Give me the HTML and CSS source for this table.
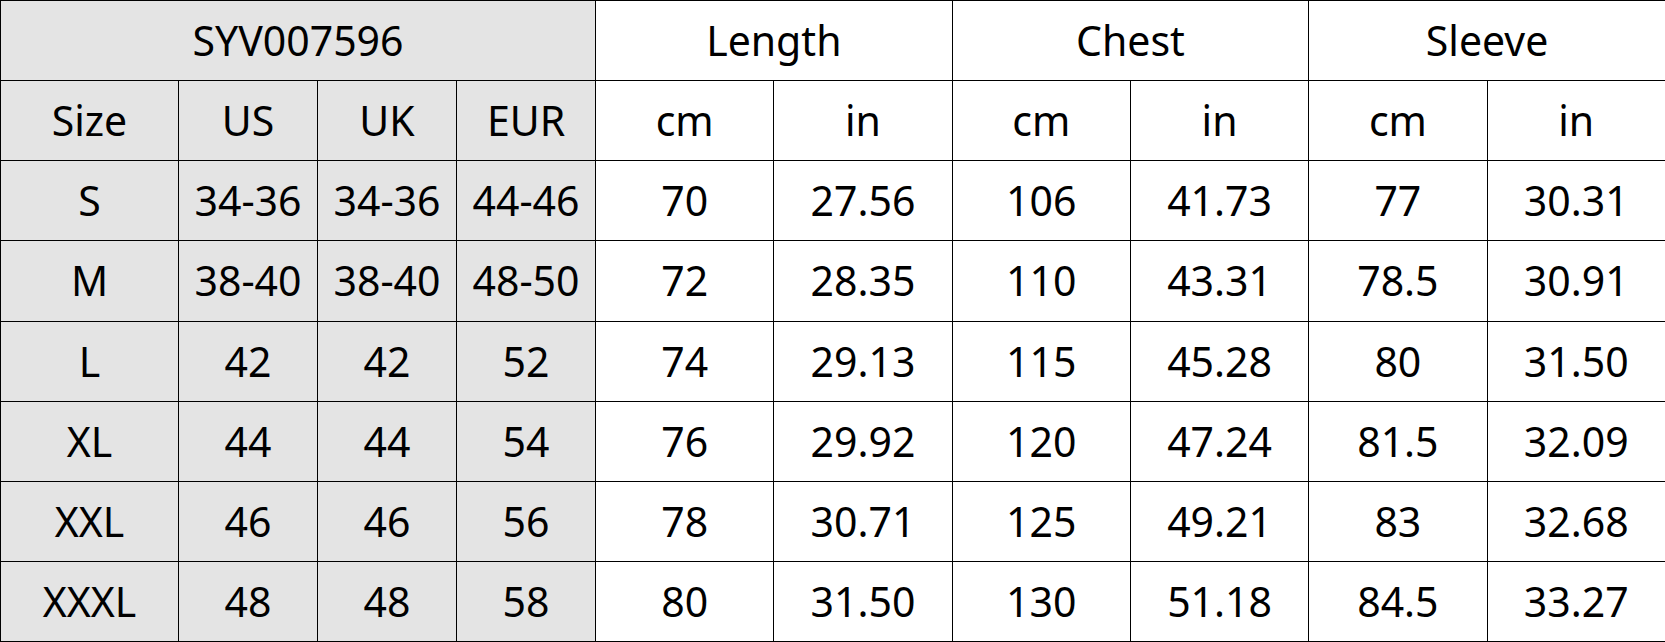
FILE: index.html
```html
<!DOCTYPE html>
<html>
<head>
<meta charset="utf-8">
<link rel="stylesheet" href="styles.css">
</head>
<body>
<table class="chart">
  <colgroup>
    <col class="c-size"><col class="c-reg"><col class="c-reg"><col class="c-reg">
    <col class="c-m"><col class="c-m"><col class="c-m"><col class="c-m"><col class="c-m"><col class="c-m">
  </colgroup>
  <tr>
    <td class="g" colspan="4">SYV007596</td>
    <td colspan="2">Length</td>
    <td colspan="2">Chest</td>
    <td colspan="2">Sleeve</td>
  </tr>
  <tr>
    <td class="g">Size</td><td class="g">US</td><td class="g">UK</td><td class="g">EUR</td>
    <td>cm</td><td>in</td><td>cm</td><td>in</td><td>cm</td><td>in</td>
  </tr>
  <tr>
    <td class="g">S</td><td class="g">34-36</td><td class="g">34-36</td><td class="g">44-46</td>
    <td>70</td><td>27.56</td><td>106</td><td>41.73</td><td>77</td><td>30.31</td>
  </tr>
  <tr>
    <td class="g">M</td><td class="g">38-40</td><td class="g">38-40</td><td class="g">48-50</td>
    <td>72</td><td>28.35</td><td>110</td><td>43.31</td><td>78.5</td><td>30.91</td>
  </tr>
  <tr>
    <td class="g">L</td><td class="g">42</td><td class="g">42</td><td class="g">52</td>
    <td>74</td><td>29.13</td><td>115</td><td>45.28</td><td>80</td><td>31.50</td>
  </tr>
  <tr>
    <td class="g">XL</td><td class="g">44</td><td class="g">44</td><td class="g">54</td>
    <td>76</td><td>29.92</td><td>120</td><td>47.24</td><td>81.5</td><td>32.09</td>
  </tr>
  <tr>
    <td class="g">XXL</td><td class="g">46</td><td class="g">46</td><td class="g">56</td>
    <td>78</td><td>30.71</td><td>125</td><td>49.21</td><td>83</td><td>32.68</td>
  </tr>
  <tr>
    <td class="g">XXXL</td><td class="g">48</td><td class="g">48</td><td class="g">58</td>
    <td>80</td><td>31.50</td><td>130</td><td>51.18</td><td>84.5</td><td>33.27</td>
  </tr>
</table>
</body>
</html>
```

FILE: styles.css
```css
html, body {
  margin: 0;
  padding: 0;
  background: #ffffff;
}
.chart {
  width: 1665px;
  height: 642px;
  table-layout: fixed;
  border-collapse: collapse;
  font-family: "Noto Sans", "Open Sans", sans-serif;
  font-size: 41px;
  color: #000;
}
.c-size { width: 178px; }
.c-reg { width: 139px; }
.c-m { width: 178.3px; }
.chart td {
  border: 1px solid #000;
  height: 79px;
  padding: 0;
  text-align: center;
  vertical-align: middle;
  line-height: 1;
  white-space: nowrap;
}
.chart td.g {
  background: #e4e4e4;
}
```
